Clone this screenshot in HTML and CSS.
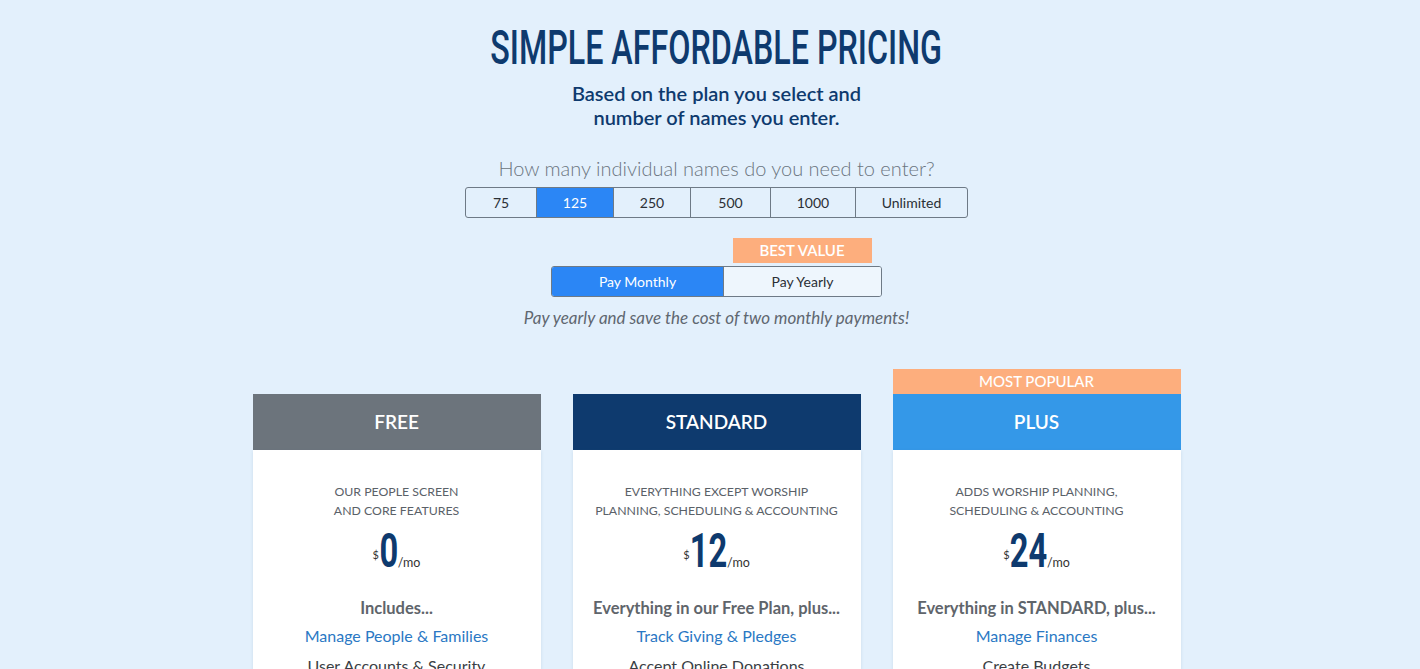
FILE: index.html
```html
<!DOCTYPE html>
<html lang="en">
<head>
<meta charset="utf-8">
<title>Pricing</title>
<link rel="stylesheet" href="styles.css">
</head>
<body>
<main class="pricing">
  <h1 class="title"><span class="cond">SIMPLE AFFORDABLE PRICING</span></h1>
  <p class="lead">Based on the plan you select and<br>number of names you enter.</p>

  <p class="question">How many individual names do you need to enter?</p>
  <div class="seg names">
    <button class="seg-btn w75">75</button>
    <button class="seg-btn w125 active">125</button>
    <button class="seg-btn w250">250</button>
    <button class="seg-btn w500">500</button>
    <button class="seg-btn w1000">1000</button>
    <button class="seg-btn wunl">Unlimited</button>
  </div>

  <div class="billing">
    <span class="best">BEST VALUE</span>
    <div class="seg pay">
      <button class="seg-btn monthly active">Pay Monthly</button>
      <button class="seg-btn yearly">Pay Yearly</button>
    </div>
  </div>
  <p class="note">Pay yearly and save the cost of two monthly payments!</p>

  <div class="cards">
    <section class="card">
      <div class="ribbon-space"></div>
      <header class="card-head free">FREE</header>
      <div class="card-body">
        <p class="desc">OUR PEOPLE SCREEN<br>AND CORE FEATURES</p>
        <div class="price"><span class="cur">$</span><span class="amt one">0</span><span class="per">/mo</span></div>
        <p class="inc">Includes...</p>
        <a class="feat link" href="#">Manage People &amp; Families</a>
        <p class="feat">User Accounts &amp; Security</p>
      </div>
    </section>
    <section class="card">
      <div class="ribbon-space"></div>
      <header class="card-head standard">STANDARD</header>
      <div class="card-body">
        <p class="desc">EVERYTHING EXCEPT WORSHIP<br>PLANNING, SCHEDULING &amp; ACCOUNTING</p>
        <div class="price"><span class="cur">$</span><span class="amt two">12</span><span class="per">/mo</span></div>
        <p class="inc">Everything in our Free Plan, plus...</p>
        <a class="feat link" href="#">Track Giving &amp; Pledges</a>
        <p class="feat">Accept Online Donations</p>
      </div>
    </section>
    <section class="card">
      <div class="ribbon">MOST POPULAR</div>
      <header class="card-head plus">PLUS</header>
      <div class="card-body">
        <p class="desc">ADDS WORSHIP PLANNING,<br>SCHEDULING &amp; ACCOUNTING</p>
        <div class="price"><span class="cur">$</span><span class="amt two">24</span><span class="per">/mo</span></div>
        <p class="inc">Everything in STANDARD, plus...</p>
        <a class="feat link" href="#">Manage Finances</a>
        <p class="feat">Create Budgets</p>
      </div>
    </section>
  </div>
</main>
</body>
</html>
```

FILE: styles.css
```css
* { box-sizing: border-box; }
html, body { margin: 0; padding: 0; }
body {
  background: #e3f0fc;
  font-family: Lato, "Noto Sans", sans-serif;
  color: #4a4f55;
  overflow: hidden;
}
.pricing {
  display: flex;
  flex-direction: column;
  align-items: center;
  padding: 23px 0 0 13px;
}
.title {
  margin: 0;
  height: 50px;
  font-family: Roboto, "Liberation Sans", sans-serif;
  font-weight: 500;
  font-size: 48px;
  line-height: 50px;
  color: #0e3a6e;
  display: flex;
  justify-content: center;
  width: 760px;
}
.cond {
  display: inline-block;
  transform: scaleX(0.672);
  white-space: nowrap;
}
.lead {
  margin: 8px 0 0;
  font-size: 20px;
  line-height: 24px;
  font-weight: 600;
  color: #0e3a6e;
  text-align: center;
}
.question {
  margin: 27px 0 0;
  font-size: 20px;
  line-height: 24px;
  font-weight: 300;
  color: #6b7580;
}
.seg {
  display: flex;
  border: 1px solid #6e7a86;
  border-radius: 3px;
  overflow: hidden;
  background: #e3f0fc;
}
.names { margin-top: 7px; height: 31px; }
.seg-btn {
  font-family: Lato, "Noto Sans", sans-serif;
  font-size: 14px;
  color: #2a2f35;
  background: transparent;
  border: 0;
  border-left: 1px solid #6e7a86;
  padding: 0;
  height: 100%;
  cursor: pointer;
}
.seg-btn:first-child { border-left: 0; }
.seg-btn.active { background: #2b86f5; color: #ffffff; }
.w75 { width: 70px; }
.w125 { width: 77px; }
.w250 { width: 77px; }
.w500 { width: 80px; }
.w1000 { width: 85px; }
.wunl { width: 112px; }

.billing {
  margin-top: 20px;
  display: grid;
  grid-template-columns: 171px 160px;
  row-gap: 3px;
}
.best {
  grid-column: 2;
  justify-self: center;
  width: 139px;
  height: 25px;
  background: #fdae7d;
  color: #ffffff;
  font-size: 15px;
  line-height: 25px;
  text-align: center;
  font-weight: 600;
}
.pay {
  grid-column: 1 / span 2;
  height: 31px;
}
.monthly { width: 171px; }
.yearly { flex: 1; background: #eef6fd; }

.note {
  margin: 10px 0 0;
  font-size: 17px;
  line-height: 21px;
  font-style: italic;
  color: #5f6770;
}

.cards {
  margin-top: 41px;
  display: flex;
  gap: 32px;
  align-items: flex-start;
}
.card {
  width: 288px;
  display: flex;
  flex-direction: column;
}
.ribbon-space { height: 25px; }
.ribbon {
  height: 25px;
  background: #fdae7d;
  color: #ffffff;
  font-size: 15px;
  line-height: 25px;
  text-align: center;
  font-weight: 500;
}
.card-head {
  height: 56px;
  line-height: 56px;
  text-align: center;
  color: #ffffff;
  font-size: 19px;
  font-weight: 600;
}
.free { background: #6c747c; }
.standard { background: #0e3a6e; }
.plus { background: #3498e8; }
.card-body {
  background: #ffffff;
  box-shadow: 0 1px 3px rgba(90, 120, 150, 0.18);
  height: 300px;
  display: flex;
  flex-direction: column;
  align-items: center;
  padding-top: 32px;
}
.desc {
  margin: 0;
  font-size: 12.3px;
  line-height: 19px;
  color: #5a6168;
  text-align: center;
}
.price {
  margin-top: 6px;
  height: 50px;
  line-height: 50px;
  text-align: center;
  white-space: nowrap;
  color: #0e3a6e;
}
.cur {
  font-size: 11px;
  color: #333;
  vertical-align: 8px;
}
.amt {
  font-family: Roboto, "Liberation Sans", sans-serif;
  font-weight: 700;
  font-size: 48px;
  display: inline-block;
  transform: scaleX(0.68);
}
.amt.one { margin: 0 -0.16ch; }
.amt.two { margin: 0 -0.32ch; }
.per {
  font-size: 12.5px;
  color: #333;
}
.inc {
  margin: 21px 0 0;
  font-size: 16.5px;
  font-weight: 700;
  color: #5f656b;
  line-height: 22px;
}
.feat {
  margin: 6px 0 0;
  font-size: 16px;
  line-height: 22px;
  color: #3a3f45;
}
.link {
  color: #2a78c4;
  text-decoration: none;
}
.link + .feat { margin-top: 8px; }
```
